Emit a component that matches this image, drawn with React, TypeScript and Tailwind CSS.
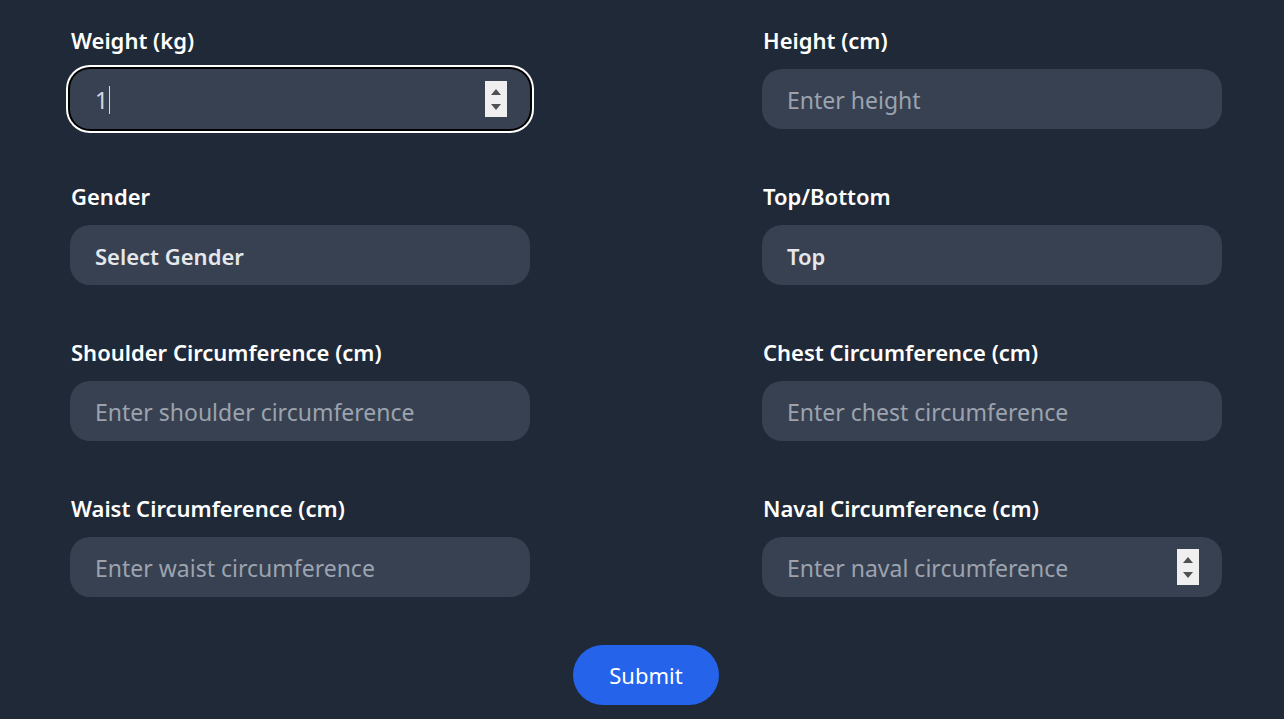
import { FC } from "react";

const font = { fontFamily: '"Noto Sans", "Open Sans", sans-serif' };

const Spinner: FC = () => (
  <div className="flex h-[36px] w-[22px] shrink-0 flex-col items-center justify-center gap-[9px] bg-[#efefef]">
    <svg width="10" height="6" viewBox="0 0 10 6">
      <path d="M5 0 L10 6 L0 6 Z" fill="#505050" />
    </svg>
    <svg width="10" height="6" viewBox="0 0 10 6">
      <path d="M0 0 L10 0 L5 6 Z" fill="#505050" />
    </svg>
  </div>
);

type FieldProps = {
  label: string;
  placeholder?: string;
  value?: string;
  select?: boolean;
  focused?: boolean;
  spinner?: boolean;
};

const Field: FC<FieldProps> = ({ label, placeholder, value, select, focused, spinner }) => (
  <div className="flex flex-col">
    <label className="mb-[15px] pl-px text-[22px] leading-[28px] font-semibold text-white">
      {label}
    </label>
    <div
      className={
        "flex h-[60px] items-center rounded-[20px] bg-[#374151] pl-[25px] pr-[23px] " +
        (focused ? "shadow-[0_0_0_2px_#000,0_0_0_4px_#fff]" : "")
      }
    >
      <div className="flex flex-1 items-center pt-[2px] text-[23px]">
        {value ? (
          <>
            <span className="text-[#d1d9e6]">{value}</span>
            <span className="ml-px h-[28px] w-px bg-[#d1d9e6]" />
          </>
        ) : select ? (
          <span className="text-[22px] font-semibold text-[#e5e7eb]">{placeholder}</span>
        ) : (
          <span className="text-[#9ca3af]">{placeholder}</span>
        )}
      </div>
      {spinner && <Spinner />}
    </div>
  </div>
);

const App: FC = () => {
  return (
    <main className="min-h-screen w-full bg-[#1f2937] pt-[26px]" style={font}>
      <div className="mx-auto flex w-[1152px] translate-x-[4px] flex-col items-center">
        <div className="grid w-full grid-cols-[460px_460px] justify-between gap-y-[53px]">
          <Field label="Weight (kg)" value="1" focused spinner />
          <Field label="Height (cm)" placeholder="Enter height" />
          <Field label="Gender" placeholder="Select Gender" select />
          <Field label="Top/Bottom" placeholder="Top" select />
          <Field label="Shoulder Circumference (cm)" placeholder="Enter shoulder circumference" />
          <Field label="Chest Circumference (cm)" placeholder="Enter chest circumference" />
          <Field label="Waist Circumference (cm)" placeholder="Enter waist circumference" />
          <Field label="Naval Circumference (cm)" placeholder="Enter naval circumference" spinner />
        </div>
        <button className="mt-[48px] h-[60px] w-[146px] rounded-full bg-[#2563eb] text-[22px] text-white">
          Submit
        </button>
      </div>
    </main>
  );
};

export default App;
